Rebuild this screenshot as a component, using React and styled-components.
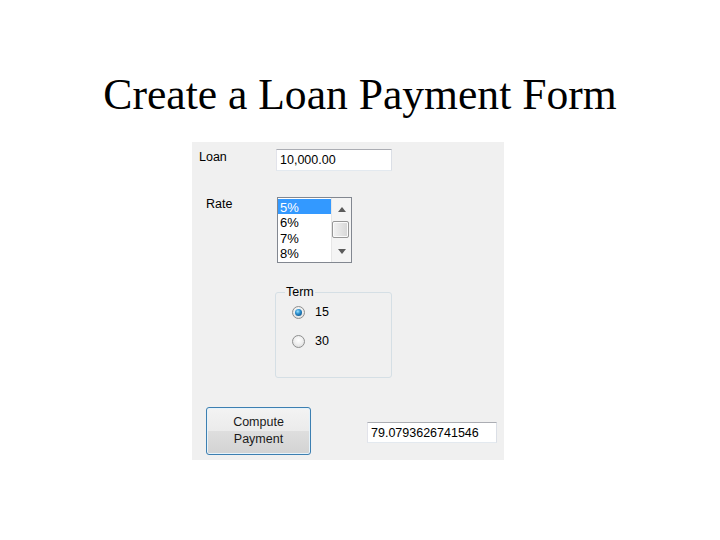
import React from "react";
import styled, { createGlobalStyle } from "styled-components";

const Global = createGlobalStyle`
  html, body { margin: 0; padding: 0; background: #ffffff; }
  body { width: 720px; height: 540px; overflow: hidden; }
`;

const Page = styled.div`
  width: 720px;
  height: 540px;
  display: flex;
  flex-direction: column;
  background: #ffffff;
`;

const Title = styled.h1`
  margin: 0;
  padding-top: 72px;
  font-family: "Liberation Serif", "Times New Roman", serif;
  font-weight: normal;
  font-size: 43.6px;
  line-height: 44px;
  color: #000;
  text-align: center;
`;

const Panel = styled.div`
  box-sizing: border-box;
  margin: 26px 0 0 192px;
  width: 312px;
  height: 318px;
  padding-top: 7px;
  background: #f0f0f0;
  display: flex;
  flex-direction: column;
  font-family: "Liberation Sans", Arial, sans-serif;
  font-size: 12.5px;
  color: #000;
`;

const Row = styled.div`
  display: flex;
  align-items: flex-start;
  margin-top: ${(p) => p.$top || 0}px;
`;

const Label = styled.div`
  margin-left: ${(p) => p.$indent}px;
  width: ${(p) => p.$width}px;
  padding-top: ${(p) => p.$pad || 0}px;
  line-height: 15px;
  white-space: nowrap;
`;

const TextBox = styled.div`
  box-sizing: border-box;
  width: ${(p) => p.$width}px;
  height: ${(p) => p.$height}px;
  margin-left: ${(p) => p.$indent || 0}px;
  margin-top: ${(p) => p.$top || 0}px;
  padding-left: 3px;
  display: flex;
  align-items: center;
  background: #ffffff;
  border: 1px solid;
  border-color: #abadb3 #dbdfe6 #e3e9ef #e2e3ea;
  white-space: nowrap;
`;

const ListBox = styled.div`
  box-sizing: border-box;
  width: 75px;
  height: 66px;
  border: 1px solid #828790;
  background: #ffffff;
  display: flex;
`;

const Items = styled.div`
  width: 53px;
  padding-top: 1px;
  display: flex;
  flex-direction: column;
`;

const Item = styled.div`
  height: 15.4px;
  line-height: 18px;
  padding-left: 2px;
  font-size: 13px;
  overflow: visible;
  background: ${(p) => (p.$selected ? "#3399ff" : "transparent")};
  color: ${(p) => (p.$selected ? "#ffffff" : "#000000")};
`;

const ScrollBar = styled.div`
  flex: 1;
  display: flex;
  flex-direction: column;
  align-items: stretch;
  background: #f4f4f4;
  border-left: 1px solid #e6e6e6;
`;

const ArrowButton = styled.div`
  height: ${(p) => p.$h}px;
  display: flex;
  align-items: center;
  justify-content: center;
`;

const Thumb = styled.div`
  box-sizing: border-box;
  height: 17px;
  margin: 0 2px 0 0;
  border: 1px solid #979797;
  border-radius: 2px;
  background: linear-gradient(to right, #f2f2f2, #e4e4e4 50%, #d6d6d6);
  box-shadow: inset 0 0 0 1px #fafafa;
`;

const Spacer = styled.div`
  height: ${(p) => p.$h}px;
`;

const GroupBox = styled.div`
  box-sizing: border-box;
  margin: 29px 0 0 83px;
  width: 117px;
  height: 86px;
  border: 1px solid #d5dfe5;
  border-radius: 3px;
  display: flex;
  flex-direction: column;
  padding-left: 16px;
`;

const GroupTitle = styled.div`
  align-self: flex-start;
  margin: -8px 0 0 -7px;
  padding: 0 1px;
  line-height: 15px;
  background: #f0f0f0;
`;

const RadioRow = styled.div`
  display: flex;
  align-items: center;
  height: 16px;
  margin-top: ${(p) => p.$top}px;
  gap: 10px;
`;

const RadioDot = styled.span`
  box-sizing: border-box;
  width: 13px;
  height: 13px;
  border-radius: 50%;
  border: 1px solid #8e8f8f;
  background: radial-gradient(circle at 50% 40%, #ffffff 0%, #f0f0f0 45%, #d4d4d4 100%);
  display: flex;
  align-items: center;
  justify-content: center;

  &::after {
    content: "";
    display: ${(p) => (p.$checked ? "block" : "none")};
    width: 7px;
    height: 7px;
    border-radius: 50%;
    background: radial-gradient(circle at 40% 35%, #9be2ff 0%, #2b8fcf 40%, #11588e 80%, #0b3e6b 100%);
  }
`;

const ComputeButton = styled.button`
  box-sizing: border-box;
  margin-left: 14px;
  width: 105px;
  height: 48px;
  padding: 0;
  border: 1px solid #3c7fb1;
  border-radius: 3px;
  background: linear-gradient(#f3f3f3 0%, #ebebeb 49%, #dedede 50%, #d3d3d3 100%);
  box-shadow: inset 0 0 0 1px #e6f3fb;
  font-family: "Liberation Sans", Arial, sans-serif;
  font-size: 12.5px;
  line-height: 17px;
  color: #1a1a1a;
  text-align: center;
`;

function ArrowIcon({ down }) {
  return (
    <svg width="8" height="5" viewBox="0 0 8 5">
      <path
        d={down ? "M0 0 H8 L4 5 Z" : "M0 5 H8 L4 0 Z"}
        fill="#5b5b5b"
      />
    </svg>
  );
}

export default function App() {
  return (
    <Page>
      <Global />
      <Title>Create a Loan Payment Form</Title>
      <Panel>
        <Row>
          <Label $indent={7} $width={77} $pad={1}>Loan</Label>
          <TextBox $width={116} $height={22}>10,000.00</TextBox>
        </Row>
        <Row $top={26}>
          <Label $indent={14} $width={71}>Rate</Label>
          <ListBox>
            <Items>
              <Item $selected>5%</Item>
              <Item>6%</Item>
              <Item>7%</Item>
              <Item>8%</Item>
            </Items>
            <ScrollBar>
              <ArrowButton $h={23}>
                <ArrowIcon />
              </ArrowButton>
              <Thumb />
              <Spacer $h={2} />
              <ArrowButton $h={22}>
                <ArrowIcon down />
              </ArrowButton>
            </ScrollBar>
          </ListBox>
        </Row>
        <GroupBox>
          <GroupTitle>Term</GroupTitle>
          <RadioRow $top={4}>
            <RadioDot $checked />
            <span>15</span>
          </RadioRow>
          <RadioRow $top={13}>
            <RadioDot />
            <span>30</span>
          </RadioRow>
        </GroupBox>
        <Row $top={29}>
          <ComputeButton type="button">
            Compute
            <br />
            Payment
          </ComputeButton>
          <TextBox $width={130} $height={21} $indent={56} $top={15}>
            79.0793626741546
          </TextBox>
        </Row>
      </Panel>
    </Page>
  );
}
